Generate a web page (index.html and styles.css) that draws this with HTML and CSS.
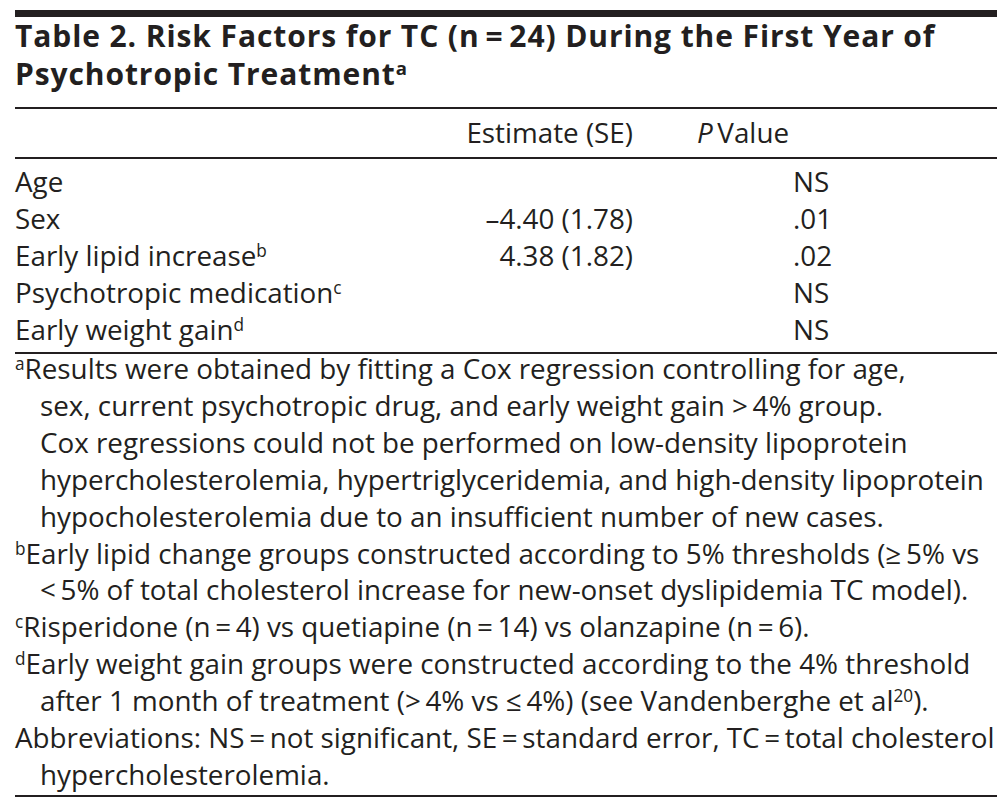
FILE: index.html
```html
<!DOCTYPE html>
<html lang="en">
<head>
<meta charset="utf-8">
<title>Table 2</title>
<link rel="stylesheet" href="styles.css">
</head>
<body>
<div class="sheet">
  <div class="top-rule"></div>
  <h1 class="title">Table 2. Risk Factors for TC (n&#8201;=&#8201;24) During the First Year of<br>Psychotropic Treatment<sup>a</sup></h1>
  <table class="data">
    <colgroup>
      <col class="c-label">
      <col class="c-est">
      <col class="c-p">
    </colgroup>
    <thead>
      <tr>
        <th class="label"></th>
        <th class="est">Estimate (SE)</th>
        <th class="pval"><i>P</i>&#8201;Value</th>
      </tr>
    </thead>
    <tbody>
      <tr class="first"><td class="label">Age</td><td class="est"></td><td class="pv">NS</td></tr>
      <tr><td class="label">Sex</td><td class="est">–4.40 (1.78)</td><td class="pv">.01</td></tr>
      <tr><td class="label">Early lipid increase<sup>b</sup></td><td class="est">4.38 (1.82)</td><td class="pv">.02</td></tr>
      <tr><td class="label">Psychotropic medication<sup>c</sup></td><td class="est"></td><td class="pv">NS</td></tr>
      <tr class="last"><td class="label">Early weight gain<sup>d</sup></td><td class="est"></td><td class="pv">NS</td></tr>
    </tbody>
  </table>
  <div class="notes">
    <p><sup>a</sup>Results were obtained by fitting a Cox regression controlling for age,<br>sex, current psychotropic drug, and early weight gain &gt;&#8201;4% group.<br>Cox regressions could not be performed on low-density lipoprotein<br>hypercholesterolemia, hypertriglyceridemia, and high-density lipoprotein<br>hypocholesterolemia due to an insufficient number of new cases.</p>
    <p><sup>b</sup>Early lipid change groups constructed according to 5% thresholds (≥&#8201;5% vs<br>&lt;&#8201;5% of total cholesterol increase for new-onset dyslipidemia TC model).</p>
    <p><sup>c</sup>Risperidone (n&#8201;=&#8201;4) vs quetiapine (n&#8201;=&#8201;14) vs olanzapine (n&#8201;=&#8201;6).</p>
    <p><sup>d</sup>Early weight gain groups were constructed according to the 4% threshold<br>after 1 month of treatment (&gt;&#8201;4% vs ≤&#8201;4%) (see Vandenberghe et al<sup>20</sup>).</p>
    <p>Abbreviations: NS&#8201;=&#8201;not significant, SE&#8201;=&#8201;standard error, TC&#8201;=&#8201;total cholesterol<br>hypercholesterolemia.</p>
  </div>
  <div class="bottom-rule"></div>
</div>
</body>
</html>
```

FILE: styles.css
```css
html, body {
  margin: 0;
  padding: 0;
  background: #ffffff;
}

body {
  font-family: "Open Sans", "Noto Sans", sans-serif;
  font-size: 27.8px;
  color: #231f20;
}

.sheet {
  width: 982px;
  padding: 10px 0 0 15px;
}

.top-rule {
  height: 7px;
  background: #231f20;
}

.title {
  margin: 0 0 14px 0;
  font-size: 30px;
  font-weight: 700;
  letter-spacing: 0.9px;
  line-height: 38px;
  white-space: nowrap;
}

sup {
  font-size: 0.62em;
  line-height: 0;
  vertical-align: 0.55em;
}

.title sup {
  font-weight: 700;
}

.data {
  width: 982px;
  border-collapse: collapse;
  table-layout: fixed;
  border-top: 2px solid #231f20;
  border-bottom: 2px solid #231f20;
}

.c-label { width: 440px; }
.c-est { width: 178px; }
.c-p { width: 364px; }

.data th {
  font-weight: 400;
  line-height: 37px;
  padding: 5px 0 6px 0;
  border-bottom: 2px solid #231f20;
  white-space: nowrap;
}

.data td {
  line-height: 37px;
  padding: 0;
  white-space: nowrap;
}

.data tr.first td { padding-top: 4px; }
.data tr.last td { padding-bottom: 4px; }

.label { text-align: left; }
.est { text-align: right; }
th.pval { text-align: left; padding-left: 64px !important; }
td.pv { text-align: left; padding-left: 160px !important; }

.notes {
  margin-top: -4px;
  white-space: nowrap;
}

.notes p {
  margin: 0;
  line-height: 36.9px;
  padding-left: 25px;
  text-indent: -25px;
}

.bottom-rule {
  margin-top: 2px;
  height: 2px;
  background: #231f20;
}
```
